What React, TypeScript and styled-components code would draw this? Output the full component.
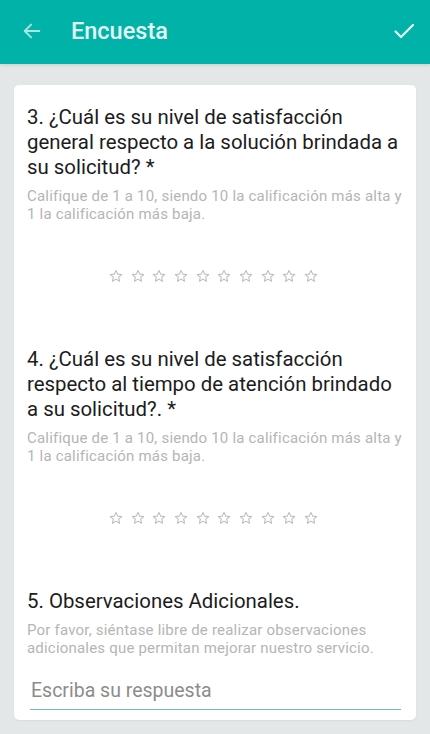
import React from "react";
import styled, { createGlobalStyle } from "styled-components";

const Global = createGlobalStyle`
  html, body { margin: 0; padding: 0; }
  body { background: #e4e7e8; font-family: Roboto, "Noto Sans", sans-serif; }
  * { box-sizing: border-box; }
`;

const Page = styled.div`
  width: 430px;
  min-height: 734px;
  background: #e4e7e8;
  display: flex;
  flex-direction: column;
`;

const Header = styled.header`
  height: 64px;
  background: #00b2a7;
  display: flex;
  align-items: center;
  padding: 0 14px 3px 20px;
  box-shadow: 0 1px 3px rgba(0, 0, 0, 0.12);
`;

const IconButton = styled.div`
  width: 24px;
  height: 24px;
  display: flex;
  align-items: center;
  justify-content: center;
`;

const Title = styled.h1`
  flex: 1;
  margin: 0 0 0 27px;
  font-family: Roboto, sans-serif;
  font-weight: 500;
  font-size: 23.5px;
  color: #e3f7f5;
  letter-spacing: 0;
`;

const Body = styled.main`
  padding: 21px 14px 15px 14px;
`;

const Card = styled.section`
  background: #ffffff;
  border-radius: 5px;
  padding: 20px 13px 10px 13px;
  box-shadow: 0 1px 2px rgba(0, 0, 0, 0.05);
  display: flex;
  flex-direction: column;
`;

const Question = styled.div<{ $gap?: number }>`
  display: flex;
  flex-direction: column;
  margin-top: ${(p) => p.$gap ?? 0}px;
`;

const QTitle = styled.div`
  font-size: 20.4px;
  line-height: 25px;
  color: #1c1c1c;
`;

const QHint = styled.div`
  margin-top: 7px;
  font-size: 15px;
  letter-spacing: 0.2px;
  line-height: 18px;
  color: #b5b5b5;
`;

const Stars = styled.div`
  margin-top: 46px;
  display: flex;
  justify-content: center;
  gap: 7.7px;
  padding-right: 3px;
`;

const Input = styled.div`
  margin: 22px 2px 0 3px;
  padding: 0 0 6px 1px;
  border-bottom: 1.5px solid #6fbdb6;
  font-size: 19.5px;
  line-height: 24px;
  color: #8c8c8c;
`;

const Star = () => (
  <svg width="14" height="14" viewBox="0 0 24 24" fill="none">
    <path
      d="M12 2.5l2.9 6.3 6.9.7-5.2 4.6 1.5 6.8L12 17.4l-6.1 3.5 1.5-6.8-5.2-4.6 6.9-.7z"
      stroke="#bdbdbd"
      strokeWidth="1.8"
      strokeLinejoin="round"
    />
  </svg>
);

const StarRow = () => (
  <Stars>
    {Array.from({ length: 10 }).map((_, i) => (
      <Star key={i} />
    ))}
  </Stars>
);

export default function App() {
  return (
    <Page>
      <Global />
      <Header>
        <IconButton>
          <svg width="22" height="22" viewBox="0 0 24 24" fill="none">
            <path d="M20 12H4.5M11 5l-7 7 7 7" stroke="#a9e6e0" strokeWidth="2" strokeLinecap="round" strokeLinejoin="round" />
          </svg>
        </IconButton>
        <Title>Encuesta</Title>
        <IconButton>
          <svg width="24" height="24" viewBox="0 0 24 24" fill="none">
            <path d="M3.5 12.5l5.5 5.5L21 6" stroke="#e8f8f6" strokeWidth="2.2" strokeLinecap="round" strokeLinejoin="round" />
          </svg>
        </IconButton>
      </Header>
      <Body>
        <Card>
          <Question>
            <QTitle>3. ¿Cuál es su nivel de satisfacción general respecto a la solución brindada a su solicitud? *</QTitle>
            <QHint>Califique de 1 a 10, siendo 10 la calificación más alta y 1 la calificación más baja.</QHint>
            <StarRow />
          </Question>
          <Question $gap={64}>
            <QTitle>4. ¿Cuál es su nivel de satisfacción respecto al tiempo de atención brindado a su solicitud?. *</QTitle>
            <QHint>Califique de 1 a 10, siendo 10 la calificación más alta y 1 la calificación más baja.</QHint>
            <StarRow />
          </Question>
          <Question $gap={64}>
            <QTitle>5. Observaciones Adicionales.</QTitle>
            <QHint>Por favor, siéntase libre de realizar observaciones adicionales que permitan mejorar nuestro servicio.</QHint>
            <Input>Escriba su respuesta</Input>
          </Question>
        </Card>
      </Body>
    </Page>
  );
}
